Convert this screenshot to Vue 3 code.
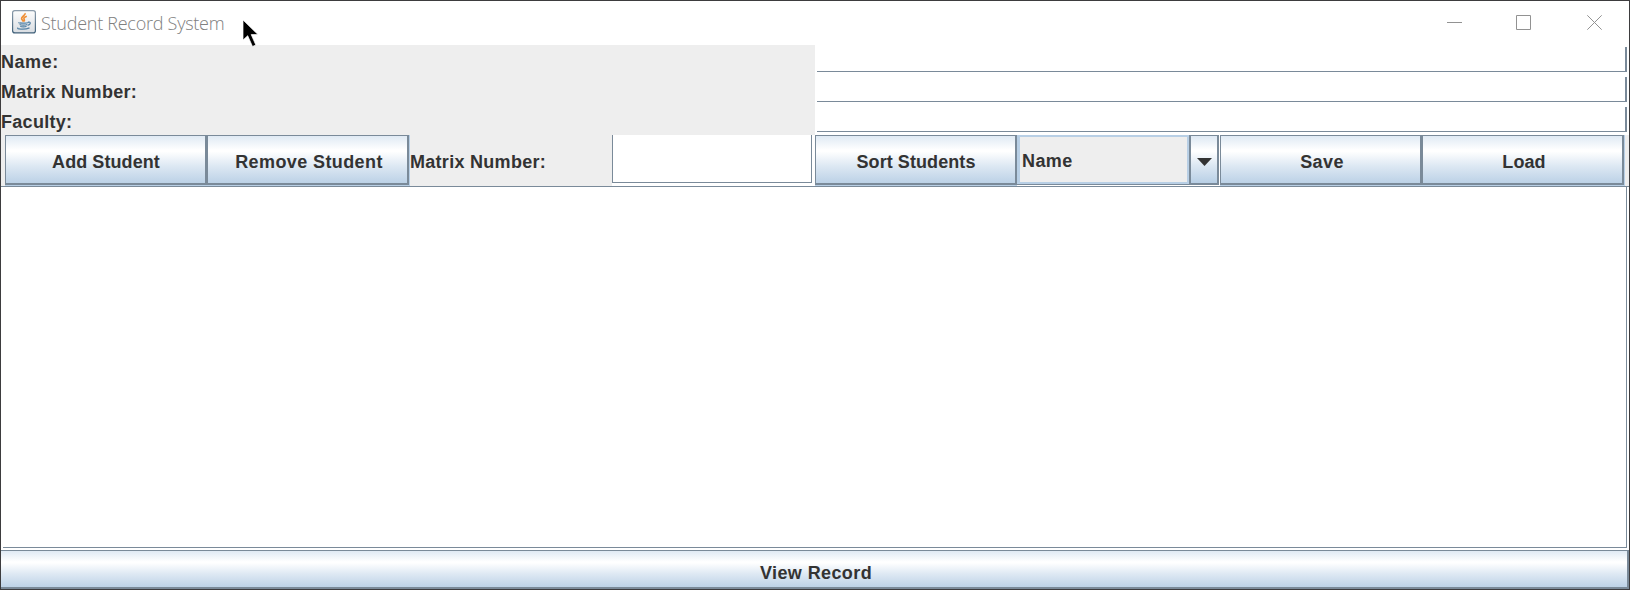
<script setup>
const fields = [
  { text: 'Name:', cls: 'ls5' },
  { text: 'Matrix Number:', cls: 'ls3' },
  { text: 'Faculty:', cls: 'ls3' }
]
</script>

<template>
  <div class="window">
    <header class="titlebar">
      <svg class="java" width="24" height="24" viewBox="0 0 24 24">
        <defs>
          <linearGradient id="tile" x1="0" y1="0" x2="0" y2="1">
            <stop offset="0" stop-color="#fdfdfd" />
            <stop offset="1" stop-color="#d9dde2" />
          </linearGradient>
          <linearGradient id="edge" x1="0" y1="0" x2="0" y2="1">
            <stop offset="0" stop-color="#8c9cab" />
            <stop offset="1" stop-color="#3f6079" />
          </linearGradient>
        </defs>
        <rect x=".6" y=".6" width="22.8" height="22.3" rx="2.2" fill="url(#tile)" stroke="url(#edge)" stroke-width="1.2" />
        <path d="M13 3.2c1 2.2-4 3.3-3.4 5.6.3 1.1 1.5 1.700 1.900 2.900M14.800 6.200c-2 .8-3.500 1.700-2.700 3 .6.900.5 1.500-.3 2.300" fill="none" stroke="#ef8f35" stroke-width="1.700" />
        <path d="M7 12.500c-1.500.8 8 .9 9.400 0M7.600 14.500c1.500.8 6.100.8 7.600 0M8.300 16.300c1.300.8 4.800.8 6.200 0M16 12.200c3.300-.9 3 2.400-.4 3.200M6.200 17.700c-3.200 1.400 6.600 2.300 11.300.2" fill="none" stroke="#5482a5" stroke-width="1.200" />
      </svg>
      <span class="title">Student Record System</span>
      <div class="controls">
        <svg width="15" height="15" viewBox="0 0 15 15"><path d="M0 7.500H15" /></svg>
        <svg width="15" height="15" viewBox="0 0 15 15"><path d="M.5 .5H14.500V14.500H.5Z" /></svg>
        <svg width="15" height="15" viewBox="0 0 15 15"><path d="M.3 .3L14.700 14.700M14.700 .3L.3 14.700" /></svg>
      </div>
    </header>

    <section class="form">
      <template v-for="f in fields" :key="f.text">
        <label class="label" :class="f.cls">{{ f.text }}</label>
        <div class="cell"><div class="field"></div></div>
      </template>
    </section>

    <section class="tools">
      <div class="slot w202"><button class="ls1">Add Student</button></div>
      <div class="slot w203"><button class="remove ls4">Remove Student</button></div>
      <label class="label w202 ls3">Matrix Number:</label>
      <div class="search w203"><div class="searchfield"></div></div>
      <div class="slot w202"><button class="ls1">Sort Students</button></div>
      <div class="combo w203">
        <div class="value ls4">Name</div>
        <div class="arrow"><svg width="15" height="8" viewBox="0 0 15 8"><path d="M0 0H15L7.500 8Z" fill="#333" /></svg></div>
      </div>
      <div class="slot w202"><button class="ls4 save">Save</button></div>
      <div class="slot w203"><button class="ls1 load">Load</button></div>
    </section>

    <section class="records"><div class="area"></div></section>
    <button class="view ls4">View Record</button>

    <svg class="cursor" width="18" height="30" viewBox="0 0 18 30">
      <path d="M1 1V21L5.700 16.700L10.500 27.500L13.800 26L9.200 15.600H16Z" fill="#000" stroke="#fff" stroke-width=".7" />
    </svg>
  </div>
</template>

<style>
body { margin: 0; background: #fff; }
</style>

<style scoped>
* { box-sizing: border-box; }
.window {
  position: relative;
  display: flex;
  flex-direction: column;
  width: 1630px;
  height: 590px;
  border: 1px solid #3d3c3e;
  background: #fff;
  color: #333;
  font: bold 18px/22px "Liberation Sans", Arial, sans-serif;
  overflow: hidden;
}
.titlebar { display: flex; height: 44px; padding: 9px 27px 0 11px; }
.java { flex: none; }
.title {
  margin-left: 5px;
  font: 300 18px/26px "Open Sans", "Noto Sans", sans-serif;
  letter-spacing: -.26px;
  color: #808080;
  white-space: nowrap;
}
.controls { display: flex; gap: 54px; margin-left: auto; padding-top: 5px; }
.controls svg { fill: none; stroke: #929292; stroke-width: 1; }
.controls svg:last-child { margin-left: 2px; }
.form { display: grid; grid-template-columns: 814px 814px; grid-auto-rows: 30px; }
.label { display: flex; align-items: center; background: #eee; white-space: nowrap; padding-top: 3px; }
.cell { padding: 2px 2px 3px 2px; }
.field { height: 25px; border-right: 2px solid #7a8a99; border-bottom: 1px solid #7a8a99; }
.tools { display: flex; height: 51px; padding-left: 4px; background: #eee; }
.w202 { width: 202px; }
.w203 { width: 203px; }
.slot { height: 51px; background: #b8cfe5; }
button {
  display: block;
  width: 100%;
  height: 50px;
  margin: 0;
  padding: 5px 0 0 1px;
  border: 1px solid #7a8a99;
  border-right-width: 2px;
  border-bottom-width: 2px;
  border-radius: 0;
  background: linear-gradient(#dde8f3, #fff 30%, #fff 33%, #dde8f3 62%, #b8cfe5);
  background-origin: border-box;
  color: #333;
  font: inherit;
}
.ls1 { letter-spacing: .08px; }
.ls3 { letter-spacing: .29px; }
.ls4 { letter-spacing: .4px; }
.ls5 { letter-spacing: .55px; }
.tools .remove, .tools .load { width: 202px; padding-left: 3px; }
.tools .save { padding-left: 3px; }
.search { padding: 0 3px 3px 0; background: #fff; }
.searchfield { height: 48px; border: 1px solid #7a8a99; border-top: 0; }
.combo { display: flex; height: 51px; background: #fff; }
.value {
  display: flex;
  align-items: center;
  width: 172px;
  height: 49px;
  padding: 3px 0 0 2px;
  border: 2px solid #b8cfe5;
  border-left-width: 3px;
  box-shadow: 0 1px 0 #7a8a99;
  background: #eee;
}
.arrow {
  display: flex;
  align-items: center;
  justify-content: center;
  width: 30px;
  height: 50px;
  padding-top: 4px;
  border: solid #7a8a99;
  border-width: 1px 2px 2px;
  background: linear-gradient(#dde8f3, #fff 30%, #fff 33%, #dde8f3 62%, #b8cfe5);
}
.records { height: 364px; padding-right: 2px; border-top: 1px solid #7a8a99; }
.area { height: 361px; margin-left: 2px; border-right: 1px solid #7a8a99; border-bottom: 1px solid #7a8a99; }
.view { height: 39px; border-left: 0; padding-top: 7px; padding-left: 4px; }
.cursor { position: absolute; left: 241px; top: 18px; }
</style>
